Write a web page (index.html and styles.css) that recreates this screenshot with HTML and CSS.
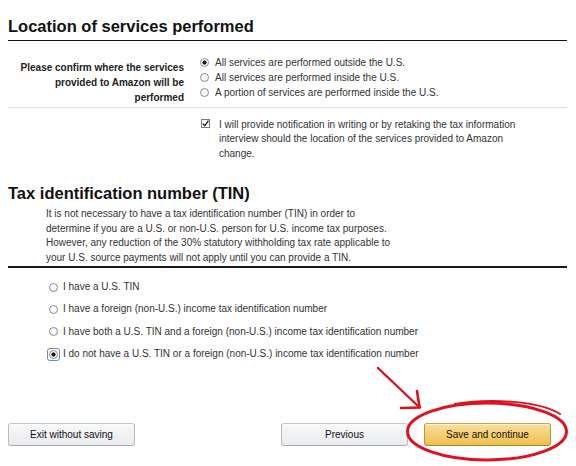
FILE: index.html
```html
<!DOCTYPE html>
<html lang="en">
<head>
<meta charset="utf-8">
<title>Tax interview</title>
<link rel="stylesheet" href="styles.css">
</head>
<body>
<div class="page">
  <section class="block">
    <h2 class="heading">Location of services performed</h2>
    <div class="question">
      <div class="q-label">Please confirm where the services provided to Amazon will be performed</div>
      <ul class="opts">
        <li><span class="radio checked"></span>All services are performed outside the U.S.</li>
        <li><span class="radio"></span>All services are performed inside the U.S.</li>
        <li><span class="radio"></span>A portion of services are performed inside the U.S.</li>
      </ul>
    </div>
    <div class="confirm">
      <span class="check"><svg width="7" height="7" viewBox="0 0 7 7"><path d="M0.8 3.6 L2.8 5.8 L6.4 0.6" fill="none" stroke="#111" stroke-width="1.3"/></svg></span>
      <p class="confirm-text">I will provide notification in writing or by retaking the tax information interview should the location of the services provided to Amazon change.</p>
    </div>
  </section>
  <section class="block">
    <div class="tin-head">
      <h2 class="heading heading-tin">Tax identification number (TIN)</h2>
      <p class="note">It is not necessary to have a tax identification number (TIN) in order to determine if you are a U.S. or non-U.S. person for U.S. income tax purposes. However, any reduction of the 30% statutory withholding tax rate applicable to your U.S. source payments will not apply until you can provide a TIN.</p>
    </div>
    <ul class="tin-opts">
      <li><span class="radio"></span>I have a U.S. TIN</li>
      <li><span class="radio"></span>I have a foreign (non-U.S.) income tax identification number</li>
      <li><span class="radio"></span>I have both a U.S. TIN and a foreign (non-U.S.) income tax identification number</li>
      <li><span class="radio checked focused"></span>I do not have a U.S. TIN or a foreign (non-U.S.) income tax identification number</li>
    </ul>
  </section>
  <div class="actions">
    <button class="btn">Exit without saving</button>
    <button class="btn btn-prev">Previous</button>
    <button class="btn btn-primary">Save and continue</button>
  </div>
  <svg class="annotation" width="576" height="466" viewBox="0 0 576 466">
    <g fill="none" stroke="#e0101e" stroke-linecap="round" stroke-linejoin="round">
      <path d="M378 368 L419 407" stroke-width="2.4"/>
      <path d="M401 408 L420 407.5" stroke-width="2.6"/>
      <path d="M417 391 L419.5 407" stroke-width="2.6"/>
      <ellipse cx="487" cy="431.5" rx="79.5" ry="28.5" stroke-width="3"/>
      <path d="M455 404 C 490 398, 540 401, 560 414" stroke-width="2"/>
    </g>
  </svg>
</div>
</body>
</html>
```

FILE: styles.css
```css
html, body {
  margin: 0;
  padding: 0;
  background: #fff;
  overflow: hidden;
}

.page {
  position: relative;
  width: 576px;
  height: 466px;
  box-sizing: border-box;
  padding: 0 9px 0 8px;
  font-family: "Liberation Sans", Arial, sans-serif;
  font-size: 10px;
  color: #333;
  overflow: hidden;
}

.heading {
  margin: 0;
  font-size: 16.5px;
  line-height: 20px;
  font-weight: bold;
  color: #111;
}

.block:first-child .heading {
  padding-top: 16px;
  padding-bottom: 4px;
  border-bottom: 1px solid #111;
}

.question {
  display: flex;
  margin-top: 13.5px;
  padding-bottom: 2px;
  border-bottom: 1px solid #e2e2e2;
}

.q-label {
  width: 176px;
  flex: none;
  padding-top: 5px;
  text-align: right;
  font-weight: bold;
  line-height: 15px;
  color: #222;
}

.opts {
  list-style: none;
  margin: 0 0 0 16px;
  padding: 0;
}

.opts li {
  display: flex;
  align-items: center;
  gap: 6px;
  line-height: 15px;
}

.radio {
  position: relative;
  display: inline-block;
  flex: none;
  width: 9px;
  height: 9px;
  box-sizing: border-box;
  border: 1px solid #8a8a8a;
  border-radius: 50%;
  background: radial-gradient(circle at 50% 40%, #ffffff 0, #f1f1f1 100%);
}

.radio.checked {
  background: radial-gradient(circle, #1a1a1a 0, #1a1a1a 1.8px, #ffffff 2.4px);
}

.radio.focused::before {
  content: "";
  position: absolute;
  inset: -3px;
  border: 1px solid #6f8cb0;
  border-radius: 3px;
}

.confirm {
  display: flex;
  align-items: flex-start;
  gap: 9px;
  margin-top: 10px;
  padding-left: 193px;
}

.check {
  flex: none;
  width: 9px;
  height: 9px;
  box-sizing: border-box;
  border: 1px solid #7a7a7a;
  background: #fff;
  margin-top: 1px;
  display: flex;
  align-items: center;
  justify-content: center;
}

.check svg {
  display: block;
}

.confirm-text {
  margin: 0;
  width: 310px;
  line-height: 14.5px;
}

.tin-head {
  margin-top: 22px;
  border-bottom: 2px solid #1a1a1a;
}

.note {
  margin: 4px 0 0 38px;
  width: 356px;
  line-height: 14.5px;
  padding-bottom: 1px;
}

.tin-opts {
  list-style: none;
  margin: 8px 0 0;
  padding: 0 0 0 41px;
}

.tin-opts li {
  display: flex;
  align-items: center;
  gap: 5px;
  line-height: 22.33px;
}

.actions {
  display: flex;
  align-items: center;
  margin-top: 58px;
  padding-right: 16px;
}

.btn {
  width: 127px;
  height: 23px;
  box-sizing: border-box;
  padding: 0;
  font-family: "Liberation Sans", Arial, sans-serif;
  font-size: 10px;
  color: #111;
  border: 1px solid;
  border-color: #c3c6cb #b8bbc1 #a8abb1;
  border-radius: 3px;
  background: linear-gradient(#f8f9fa, #e8eaed);
  box-shadow: 0 1px 0 rgba(255, 255, 255, 0.6) inset;
}

.btn-prev {
  margin-left: auto;
}

.btn-primary {
  margin-left: 16px;
  border-color: #c9a54a #b9963c #a7862f;
  background: linear-gradient(#f8df9f, #f0c14b);
}

.annotation {
  position: absolute;
  top: 0;
  left: 0;
  pointer-events: none;
}
```
